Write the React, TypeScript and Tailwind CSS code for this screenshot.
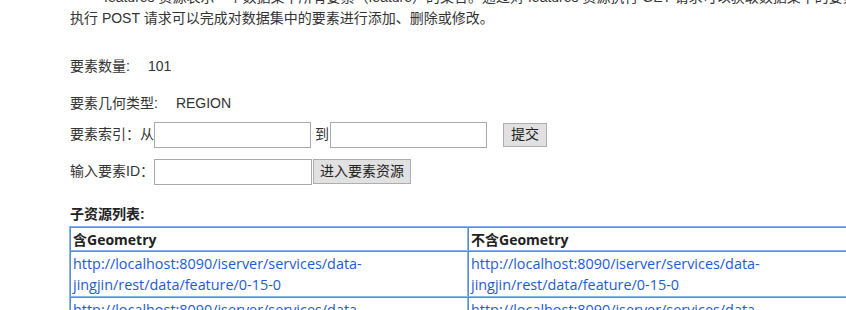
const rows = [
  "http://localhost:8090/iserver/services/data-jingjin/rest/data/feature/0-15-0",
  "http://localhost:8090/iserver/services/data-jingjin/rest/data/feature/0-15-1",
];

const font = {
  fontFamily: '"Liberation Sans", "Noto Sans CJK SC", sans-serif',
};

const cell =
  "text-left px-[2px] leading-[21px] break-words border-t border-l border-t-[#5b8bc8] border-l-[#5b8bc8] border-r border-b border-r-[#86b8ee] border-b-[#86b8ee]";

const App = () => {
  return (
    <div
      className="w-[846px] h-[310px] overflow-hidden bg-white text-[14px] text-[#333]"
      style={font}
    >
      <div className="pl-[70px]">
        <div className="-mt-[13px] leading-[21px] whitespace-nowrap">
          <p className="indent-[34px]">
            features 资源表示一个数据集中所有要素（feature）的集合。通过对 features 资源执行 GET 请求可以获取数据集中的要素，对 features 资源
          </p>
          <p>执行 POST 请求可以完成对数据集中的要素进行添加、删除或修改。</p>
        </div>

        <div className="mt-[27px] h-[21px] leading-[21px] flex">
          <span>要素数量:</span>
          <span className="ml-[18px]">101</span>
        </div>

        <div className="mt-[16px] h-[21px] leading-[21px] flex">
          <span>要素几何类型:</span>
          <span className="ml-[18px]">REGION</span>
        </div>

        <div className="mt-[7px] flex items-center h-[27px]">
          <span>要素索引：从</span>
          <input className="w-[157px] h-[26px] border border-[#a9a9a9] bg-white outline-none" />
          <span className="ml-[4px] mr-[1px]">到</span>
          <input className="w-[157px] h-[26px] border border-[#a9a9a9] bg-white outline-none" />
          <button className="ml-[16px] w-[44px] h-[24px] border border-[#adadad] bg-[#e1e1e1] text-[#222]">
            提交
          </button>
        </div>

        <div className="mt-[10px] flex items-center h-[27px]">
          <span>输入要素ID：</span>
          <input className="w-[158px] h-[26px] border border-[#a9a9a9] bg-white outline-none" />
          <button className="ml-px w-[98px] h-[25px] border border-[#adadad] bg-[#e1e1e1] text-[#222]">
            进入要素资源
          </button>
        </div>

        <p className="mt-[19px] font-bold leading-[21px] text-[#222]">子资源列表:</p>

        <table
          className="mt-px w-[798px] -ml-px border-separate border-spacing-0 border border-[#86b8ee] table-fixed"
          style={{ fontFamily: '"Open Sans", "Noto Sans CJK SC", sans-serif' }}
        >
          <thead>
            <tr>
              <th className={`${cell} h-[24px] font-bold text-[#222]`}>含Geometry</th>
              <th className={`${cell} h-[24px] font-bold text-[#222]`}>不含Geometry</th>
            </tr>
          </thead>
          <tbody>
            {rows.map((url) => (
              <tr key={url}>
                <td className={`${cell} py-px text-[14.4px]`}>
                  <a className="text-[#1d5bd1]">{url}</a>
                </td>
                <td className={`${cell} py-px text-[14.4px]`}>
                  <a className="text-[#1d5bd1]">{url}</a>
                </td>
              </tr>
            ))}
          </tbody>
        </table>
      </div>
    </div>
  );
};

export default App;
